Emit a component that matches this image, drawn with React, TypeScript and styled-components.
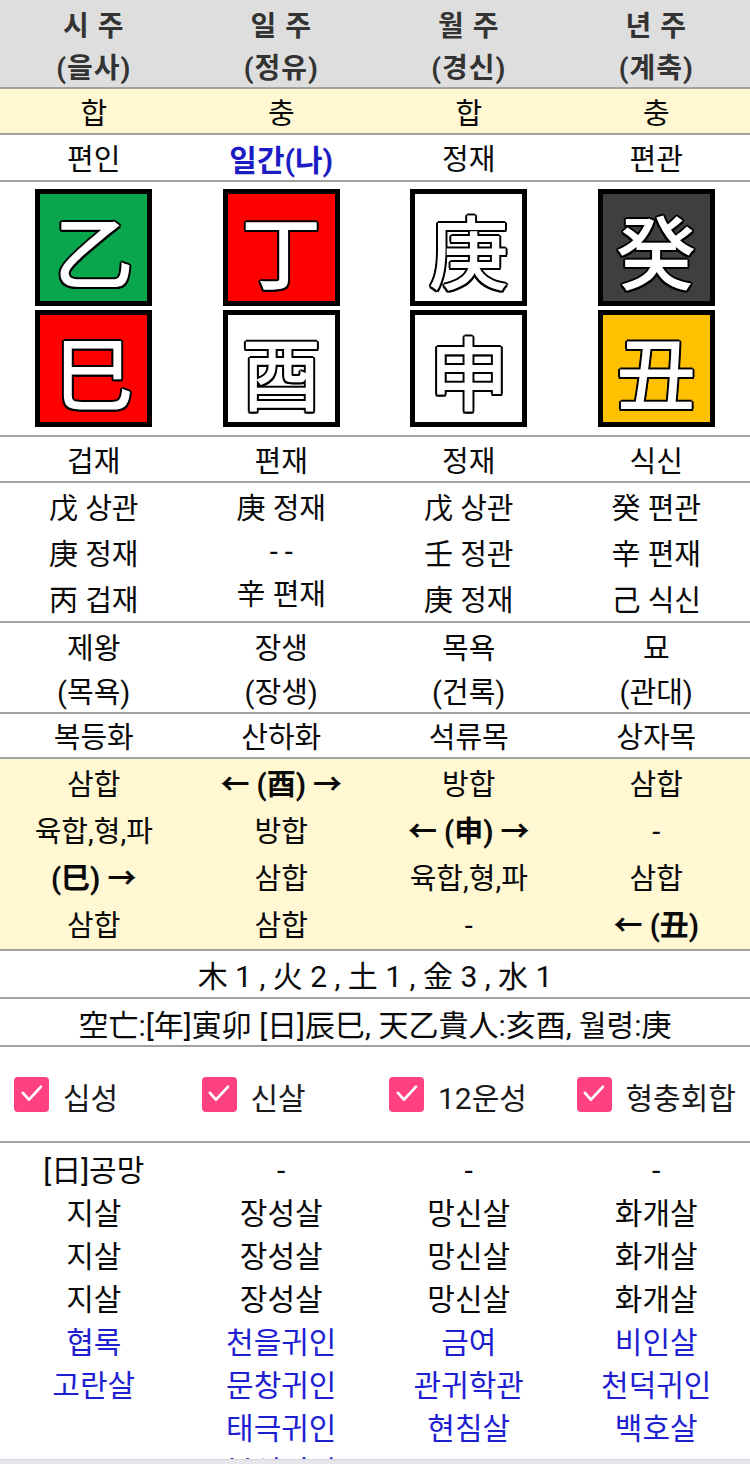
import React from 'react';
import styled, { createGlobalStyle } from 'styled-components';

const GlobalStyle = createGlobalStyle`
  html, body { margin: 0; padding: 0; background: #ffffff; }
  body {
    font-family: Roboto, "Noto Sans CJK KR", "Noto Sans", sans-serif;
    color: #111;
  }
  * { box-sizing: border-box; }
`;

const LINE = '#a2a2a2';
const BLUE = '#1f1fd2';

const Screen = styled.div`
  width: 750px;
  height: 1464px;
  display: flex;
  flex-direction: column;
  overflow: hidden;
`;

const Row = styled.div<{ $bg?: string; $lh: number; $pt?: number; $pb?: number }>`
  --lh: ${(p) => p.$lh}px;
  display: grid;
  grid-template-columns: repeat(4, 1fr);
  background: ${(p) => p.$bg || '#fff'};
  border-bottom: 2px solid ${LINE};
  padding: ${(p) => p.$pt || 0}px 0 ${(p) => p.$pb || 0}px;
  flex: none;
`;

const Col = styled.div`
  display: flex;
  flex-direction: column;
  align-items: center;
`;

/* padding-top nudges the Hangul glyphs (drawn from the CJK fallback on
   Roboto's baseline) down to the optical centre of each line */
const Line = styled.div<{ $color?: string; $bold?: boolean; $size?: number; $short?: boolean }>`
  padding-top: 6px;
  line-height: ${(p) => (p.$short ? '34px' : 'calc(var(--lh) - 6px)')};
  font-size: ${(p) => p.$size || 29}px;
  font-weight: ${(p) => (p.$bold ? 700 : 400)};
  color: ${(p) => p.$color || '#0a0a0a'};
  white-space: nowrap;
  text-align: center;
`;

const HeadLine = styled(Line)`
  font-weight: 700;
  font-size: 28px;
  letter-spacing: 1px;
  color: #333;
`;

const FullRow = styled.div<{ $lh: number; $pt?: number }>`
  border-bottom: 2px solid ${LINE};
  line-height: ${(p) => p.$lh}px;
  padding-top: ${(p) => (p.$pt || 0) + 6}px;
  font-size: 30px;
  font-weight: 400;
  text-align: center;
  color: #0a0a0a;
  white-space: nowrap;
  flex: none;
`;

const BoxRow = styled.div`
  display: grid;
  grid-template-columns: repeat(4, 1fr);
  padding: 7px 0 8px;
  border-bottom: 2px solid ${LINE};
  flex: none;
`;

const BoxCol = styled.div`
  display: flex;
  flex-direction: column;
  align-items: center;
  gap: 4px;
`;

const CharBox = styled.div<{ $bg: string }>`
  width: 117px;
  height: 117px;
  border: 5px solid #000;
  background: ${(p) => p.$bg};
  display: flex;
  align-items: center;
  justify-content: center;
  font-family: "Noto Sans CJK KR", "Noto Sans CJK JP", sans-serif;
  font-size: 80px;
  font-weight: 500;
  line-height: 1;
  color: #fff;
  text-shadow:
    2px 0 0 #000, -2px 0 0 #000, 0 2px 0 #000, 0 -2px 0 #000,
    1.5px 1.5px 0 #000, -1.5px 1.5px 0 #000, 1.5px -1.5px 0 #000, -1.5px -1.5px 0 #000,
    0 0 2px #000;
`;

const CheckRow = styled.div`
  display: grid;
  grid-template-columns: repeat(4, 1fr);
  height: 96px;
  border-bottom: 2px solid ${LINE};
  align-items: center;
  flex: none;
`;

const CheckItem = styled.label`
  display: flex;
  align-items: center;
  gap: 14px;
  padding-left: 14px;
  font-size: 30px;
  font-weight: 400;
  color: #1a1a1a;
  white-space: nowrap;
`;

const CheckText = styled.span`
  padding-top: 3px;
`;

const CheckBox = styled.span`
  width: 35px;
  height: 35px;
  border-radius: 4px;
  background: #ff4081;
  display: flex;
  align-items: center;
  justify-content: center;
  flex: none;
`;

const SinsalRow = styled.div`
  --lh: 43px;
  flex: 1;
  min-height: 0;
  overflow: hidden;
  display: grid;
  grid-template-columns: repeat(4, 1fr);
  align-items: start;
  padding-top: 3px;
`;

const BottomBar = styled.div`
  height: 5px;
  flex: none;
  background: #e6e6ec;
  border-top: 1px solid #d6d6dc;
`;

type Txt = { t: string; bold?: boolean; blue?: boolean; short?: boolean };

const pillars = [
  {
    title: '시 주', sub: '(을사)', rel: '합', ten: '편인',
    stem: { ch: '乙', bg: '#0aa64e' }, branch: { ch: '巳', bg: '#ff0000' },
    bten: '겁재',
    hidden: [{ t: '戊 상관' }, { t: '庚 정재' }, { t: '丙 겁재' }] as Txt[],
    stage: ['제왕', '(목욕)'], nap: '복등화',
    rels: [{ t: '삼합' }, { t: '육합,형,파' }, { t: '(巳) →', bold: true }, { t: '삼합' }] as Txt[],
    sinsal: [
      { t: '[日]공망' }, { t: '지살' }, { t: '지살' }, { t: '지살' },
      { t: '협록', blue: true }, { t: '고란살', blue: true },
    ] as Txt[],
  },
  {
    title: '일 주', sub: '(정유)', rel: '충', ten: '일간(나)', me: true,
    stem: { ch: '丁', bg: '#ff0000' }, branch: { ch: '酉', bg: '#ffffff' },
    bten: '편재',
    hidden: [{ t: '庚 정재' }, { t: '- -', short: true }, { t: '辛 편재' }] as Txt[],
    stage: ['장생', '(장생)'], nap: '산하화',
    rels: [{ t: '← (酉) →', bold: true }, { t: '방합' }, { t: '삼합' }, { t: '삼합' }] as Txt[],
    sinsal: [
      { t: '-' }, { t: '장성살' }, { t: '장성살' }, { t: '장성살' },
      { t: '천을귀인', blue: true }, { t: '문창귀인', blue: true },
      { t: '태극귀인', blue: true }, { t: '복성귀인', blue: true },
    ] as Txt[],
  },
  {
    title: '월 주', sub: '(경신)', rel: '합', ten: '정재',
    stem: { ch: '庚', bg: '#ffffff' }, branch: { ch: '申', bg: '#ffffff' },
    bten: '정재',
    hidden: [{ t: '戊 상관' }, { t: '壬 정관' }, { t: '庚 정재' }] as Txt[],
    stage: ['목욕', '(건록)'], nap: '석류목',
    rels: [{ t: '방합' }, { t: '← (申) →', bold: true }, { t: '육합,형,파' }, { t: '-' }] as Txt[],
    sinsal: [
      { t: '-' }, { t: '망신살' }, { t: '망신살' }, { t: '망신살' },
      { t: '금여', blue: true }, { t: '관귀학관', blue: true }, { t: '현침살', blue: true },
    ] as Txt[],
  },
  {
    title: '년 주', sub: '(계축)', rel: '충', ten: '편관',
    stem: { ch: '癸', bg: '#3f3f3f' }, branch: { ch: '丑', bg: '#ffc000' },
    bten: '식신',
    hidden: [{ t: '癸 편관' }, { t: '辛 편재' }, { t: '己 식신' }] as Txt[],
    stage: ['묘', '(관대)'], nap: '상자목',
    rels: [{ t: '삼합' }, { t: '-' }, { t: '삼합' }, { t: '← (丑)', bold: true }] as Txt[],
    sinsal: [
      { t: '-' }, { t: '화개살' }, { t: '화개살' }, { t: '화개살' },
      { t: '비인살', blue: true }, { t: '천덕귀인', blue: true }, { t: '백호살', blue: true },
    ] as Txt[],
  },
];

const checks = ['십성', '신살', '12운성', '형충회합'];

const Check = () => (
  <svg width="26" height="26" viewBox="0 0 24 24" fill="none">
    <polyline points="3.6 11 9.2 17.2 20.2 5.4" stroke="#fff" strokeWidth="2.6" strokeLinecap="round" strokeLinejoin="round" />
  </svg>
);

export default function App() {
  return (
    <>
      <GlobalStyle />
      <Screen>
        <Row $bg="#dedede" $lh={42} $pt={3}>
          {pillars.map((p) => (
            <Col key={p.title}>
              <HeadLine>{p.title}</HeadLine>
              <HeadLine>{p.sub}</HeadLine>
            </Col>
          ))}
        </Row>
        <Row $bg="#fff8d2" $lh={44}>
          {pillars.map((p, i) => (
            <Col key={i}>
              <Line>{p.rel}</Line>
            </Col>
          ))}
        </Row>
        <Row $lh={45}>
          {pillars.map((p, i) => (
            <Col key={i}>
              <Line $bold={!!p.me} $size={p.me ? 30 : 29} $color={p.me ? '#1c1cc4' : undefined}>{p.ten}</Line>
            </Col>
          ))}
        </Row>
        <BoxRow>
          {pillars.map((p, i) => (
            <BoxCol key={i}>
              <CharBox $bg={p.stem.bg}>{p.stem.ch}</CharBox>
              <CharBox $bg={p.branch.bg}>{p.branch.ch}</CharBox>
            </BoxCol>
          ))}
        </BoxRow>
        <Row $lh={44}>
          {pillars.map((p, i) => (
            <Col key={i}>
              <Line>{p.bten}</Line>
            </Col>
          ))}
        </Row>
        <Row $lh={46}>
          {pillars.map((p, i) => (
            <Col key={i}>
              {p.hidden.map((h, j) => (
                <Line key={j} $short={h.short}>{h.t}</Line>
              ))}
            </Col>
          ))}
        </Row>
        <Row $lh={44} $pt={1}>
          {pillars.map((p, i) => (
            <Col key={i}>
              {p.stage.map((s, j) => (
                <Line key={j}>{s}</Line>
              ))}
            </Col>
          ))}
        </Row>
        <Row $lh={43}>
          {pillars.map((p, i) => (
            <Col key={i}>
              <Line>{p.nap}</Line>
            </Col>
          ))}
        </Row>
        <Row $bg="#fff8d2" $lh={47} $pb={2}>
          {pillars.map((p, i) => (
            <Col key={i}>
              {p.rels.map((r, j) => (
                <Line key={j} $bold={r.bold}>{r.t}</Line>
              ))}
            </Col>
          ))}
        </Row>
        <FullRow $lh={40}>木 1 , 火 2 , 土 1 , 金 3 , 水 1</FullRow>
        <FullRow $lh={38} $pt={2}>空亡:[年]寅卯 [日]辰巳, 天乙貴人:亥酉, 월령:庚</FullRow>
        <CheckRow>
          {checks.map((c) => (
            <CheckItem key={c}>
              <CheckBox>
                <Check />
              </CheckBox>
              <CheckText>{c}</CheckText>
            </CheckItem>
          ))}
        </CheckRow>
        <SinsalRow>
          {pillars.map((p, i) => (
            <Col key={i}>
              {p.sinsal.map((s, j) => (
                <Line key={j} $size={30} $color={s.blue ? BLUE : '#0a0a0a'}>{s.t}</Line>
              ))}
            </Col>
          ))}
        </SinsalRow>
        <BottomBar />
      </Screen>
    </>
  );
}
